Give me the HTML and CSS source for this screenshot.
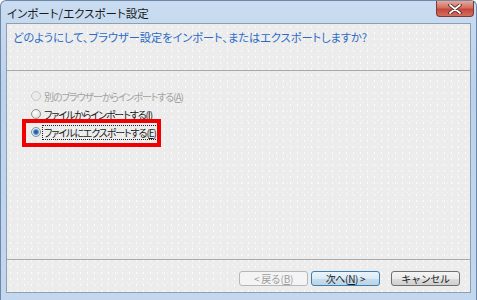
FILE: index.html
```
<!DOCTYPE html>
<html lang="ja">
<head>
  <meta charset="UTF-8">
  <title>インポート/エクスポート設定</title>
  <link rel="stylesheet" href="styles.css">
</head>
<body>
  <div class="window">
    <div class="titlebar">
      <span class="title">インポート/エクスポート設定</span>
      <span class="close">
        <svg width="14" height="10" viewBox="0 0 14 10">
          <path d="M2 1 L12 9 M12 1 L2 9" stroke="#3a2020" stroke-width="3.4" stroke-linecap="round"/>
          <path d="M2 1 L12 9 M12 1 L2 9" stroke="#ffffff" stroke-width="1.8" stroke-linecap="round"/>
        </svg>
      </span>
    </div>
    <div class="client">
      <div class="head">
        <h1 class="instruction">どのようにして、ブラウザー設定をインポート、またはエクスポートしますか?</h1>
      </div>
      <div class="options">
        <div class="option disabled">
          <span class="radio"></span>
          <span class="label">別のブラウザーからインポートする(<u>A</u>)</span>
        </div>
        <div class="option">
          <span class="radio"></span>
          <span class="label">ファイルからインポートする(<u>I</u>)</span>
        </div>
        <div class="option selected">
          <span class="radio checked"></span>
          <span class="label focus">ファイルにエクスポートする(<u>E</u>)</span>
          <span class="mark"></span>
        </div>
      </div>
      <div class="footer">
        <button class="btn" disabled>&lt; 戻る(<u>B</u>)</button>
        <button class="btn default">次へ(<u>N</u>) &gt;</button>
        <button class="btn cancel">キャンセル</button>
      </div>
    </div>
  </div>
</body>
</html>
```

FILE: styles.css
```
* {
  margin: 0;
  padding: 0;
  box-sizing: border-box;
}
body {
  width: 477px;
  height: 300px;
  overflow: hidden;
  background: #ffffff;
  font-family: "Noto Sans CJK JP", "Noto Sans", sans-serif;
  font-feature-settings: "palt";
}
.window {
  width: 477px;
  height: 300px;
  display: flex;
  flex-direction: column;
  border: 1px solid #6d87a6;
  border-bottom: 0;
  border-radius: 6px 6px 0 0;
  padding: 0 5px 7px 5px;
  background: linear-gradient(180deg, #c9dcf1 0%, #bcd2ec 30%, #c3d8ef 100%);
}
.titlebar {
  height: 22px;
  display: flex;
  align-items: flex-start;
  justify-content: space-between;
}
.title {
  font-size: 11.5px;
  line-height: 12px;
  margin-top: 6px;
  margin-left: 1px;
  color: #1a1a1a;
}
.close {
  width: 38px;
  height: 16px;
  margin-right: -3px;
  display: flex;
  align-items: center;
  justify-content: center;
  border: 1px solid #7a3a36;
  border-top: 0;
  border-radius: 0 0 4px 4px;
  background: linear-gradient(180deg, #e8a89a 0%, #d2705f 45%, #c4473a 55%, #d76e5e 100%);
}
.client {
  flex: 1;
  display: flex;
  flex-direction: column;
  border: 1px solid #8f9fb3;
  background-color: #ececec;
  background-image:
    radial-gradient(circle, #fbfbfb 0.6px, transparent 0.9px),
    radial-gradient(circle, #f7f7f7 0.6px, transparent 0.8px);
  background-size: 7px 6px, 5px 9px;
  background-position: 0 0, 3px 2px;
}
.head {
  height: 47px;
  padding: 5px 6px 0;
  border-bottom: 1px solid #a9a9a9;
}
.instruction {
  font-size: 11.2px;
  font-weight: normal;
  line-height: 16px;
  color: #2a6bc6;
}
.options {
  flex: 1;
  padding: 16px 0 0 24px;
}
.option {
  height: 18px;
  display: flex;
  align-items: center;
  gap: 1px;
  font-size: 10px;
  letter-spacing: -1.1px;
  color: #1a1a1a;
}
.option.selected {
  position: relative;
}
.radio {
  width: 10px;
  height: 10px;
  border-radius: 50%;
  border: 1px solid #8e8f8f;
  background: radial-gradient(circle at 40% 35%, #ffffff 0%, #e6e6e6 60%, #cfcfcf 100%);
}
.radio.checked {
  background:
    radial-gradient(circle, #1d4f86 0, #2f7bc2 2px, #9cc7ef 3px, transparent 3.6px),
    radial-gradient(circle at 40% 35%, #ffffff 0%, #e6e6e6 60%, #cfcfcf 100%);
}
.option.disabled {
  color: #a3a3a3;
}
.option.disabled .radio {
  border-color: #c9c9c9;
  background: #eaeaea;
}
.label {
  padding: 0 1px;
  line-height: 13px;
  border: 1px solid transparent;
}
.label.focus {
  border: 1px dotted #222222;
}
.mark {
  position: absolute;
  left: -9px;
  top: -4px;
  width: 139px;
  height: 28px;
  border: 4px solid #f00000;
}
.footer {
  height: 33px;
  border-top: 1px solid #a9a9a9;
  display: flex;
  align-items: flex-start;
  justify-content: flex-end;
  padding: 11px 10px 0 0;
  gap: 3px;
}
.btn {
  width: 69px;
  height: 15px;
  font-family: inherit;
  font-size: 10px;
  line-height: 13px;
  letter-spacing: -0.3px;
  color: #1a1a1a;
  border: 1px solid #707070;
  border-radius: 3px;
  background: linear-gradient(180deg, #f4f4f4 0%, #ebebeb 50%, #dddddd 51%, #cfcfcf 100%);
}
.btn[disabled] {
  color: #9d9d9d;
  border-color: #b5b8ba;
  background: #f4f4f4;
}
.btn.default {
  border-color: #3c7fb1;
  background: linear-gradient(180deg, #eaf4fb 0%, #dbebf6 50%, #c7dded 51%, #bcd4e6 100%);
}
.btn.cancel {
  margin-left: 8px;
}
```
